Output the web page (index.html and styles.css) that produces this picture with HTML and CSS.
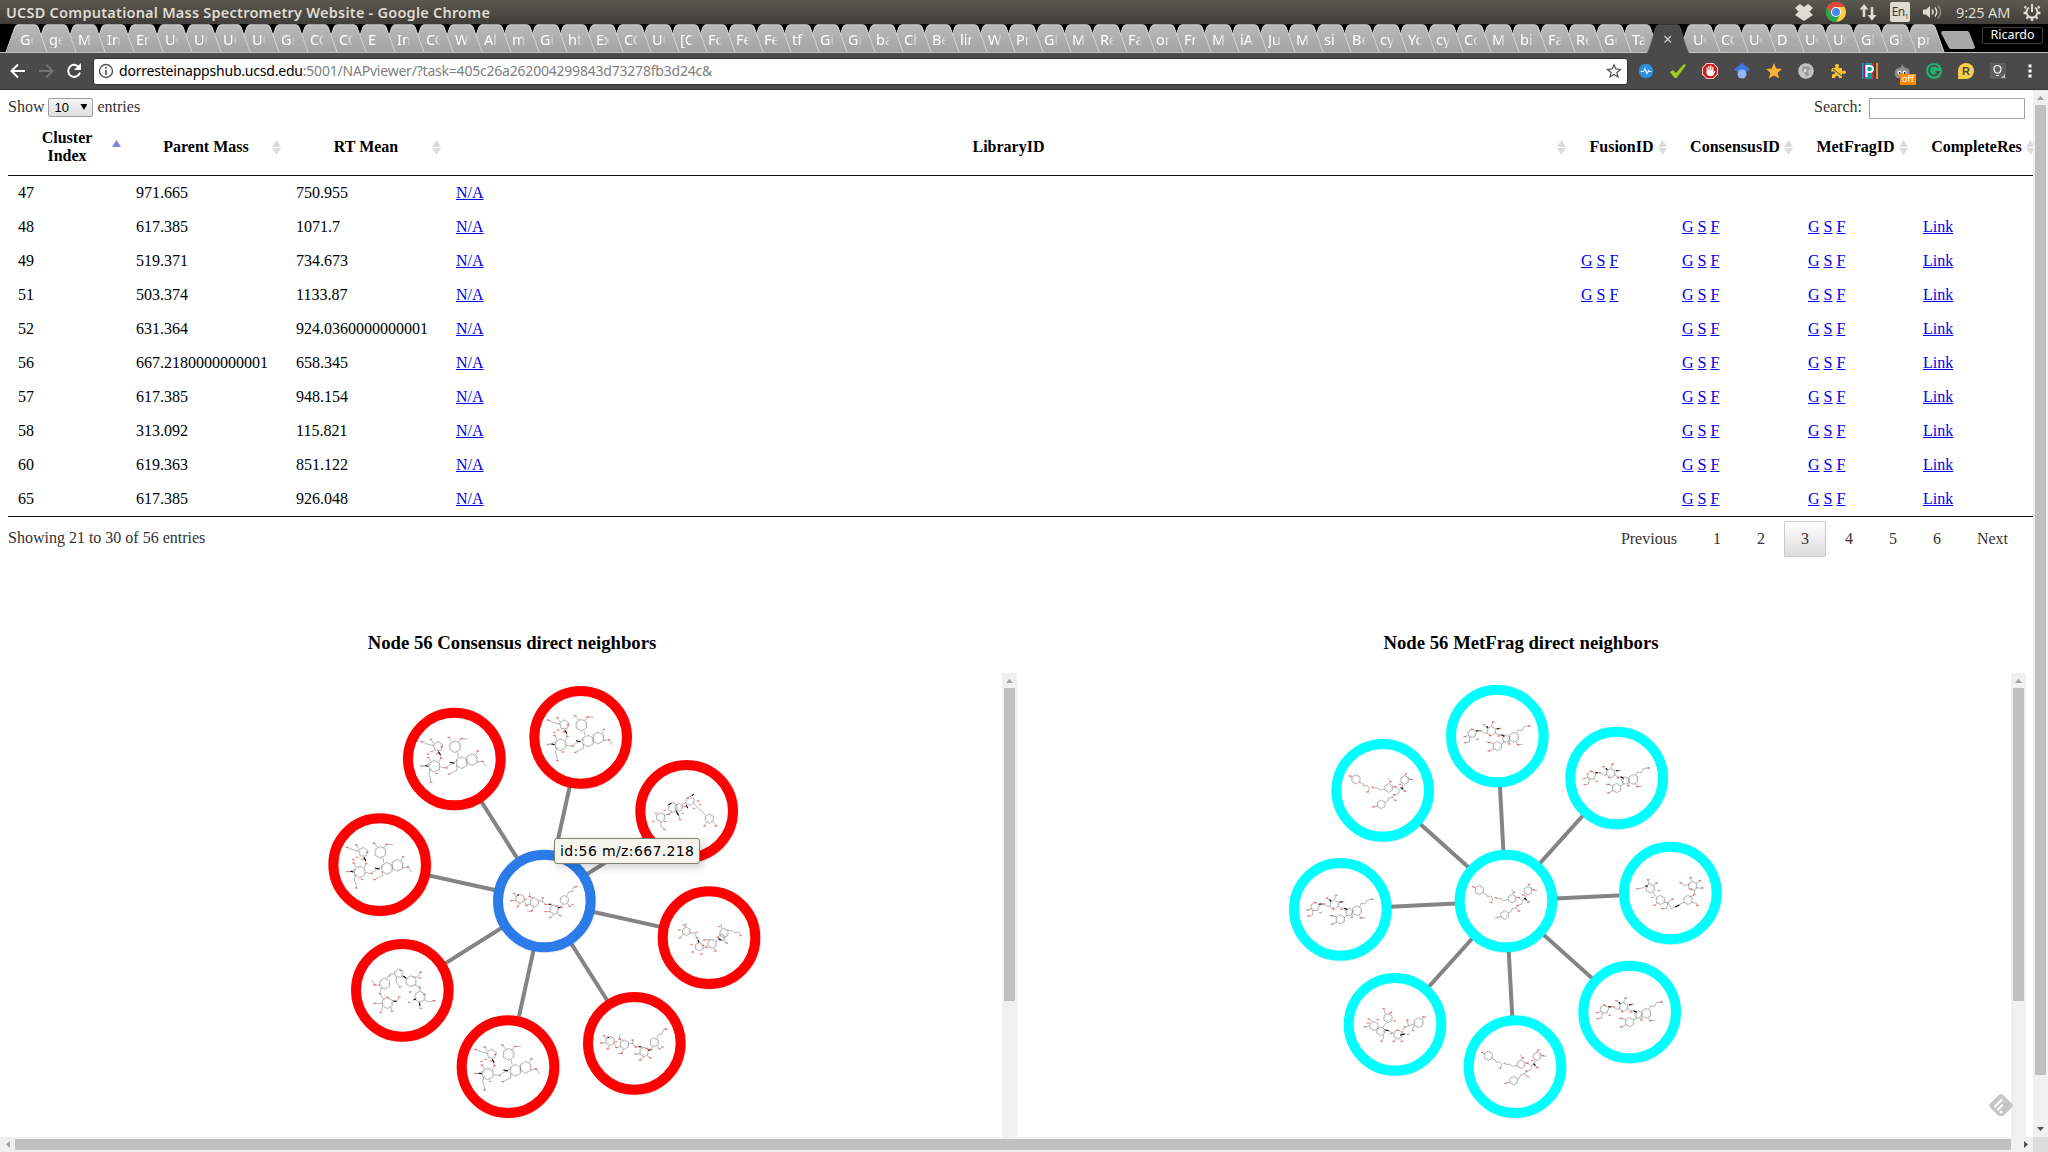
FILE: index.html
```
<!DOCTYPE html>
<html lang="en">
<head>
<meta charset="utf-8">
<title>UCSD Computational Mass Spectrometry Website</title>
<link rel="stylesheet" href="styles.css">
</head>
<body>
<header class="titlebar">
  <span class="window-title">UCSD Computational Mass Spectrometry Website - Google Chrome</span>
  <div class="tray">
    <svg class="tray-icon" viewBox="0 0 20 20"><path fill="#dfdbd2" d="M6 2l4 3 4-3 5 4-3.500 3.500L19 13l-3 2-6 4-6-4-3-2 3.500-3.500L1 6z"/></svg>
    <svg class="tray-icon" viewBox="0 0 20 20"><circle cx="10" cy="10" r="10" fill="#fdd03b"/><path fill="#e2463a" d="M1.300 5a10 10 0 0 1 17.400 0H10L5.700 12.500z"/><path fill="#2aa350" d="M1.300 5A10 10 0 0 0 10 20l4.300-7.500H5.700z"/><circle cx="10" cy="10" r="5" fill="#fff"/><circle cx="10" cy="10" r="4" fill="#4587f0"/></svg>
    <svg class="tray-icon" viewBox="0 0 20 20"><path fill="none" stroke="#dfdbd2" stroke-width="2.600" d="M6 15V4M14 5v11"/><path fill="#dfdbd2" d="M1.500 7.500L6 2l4.500 5.500zM9.500 13l4.500 5.500 4.500-5.500z"/></svg>
    <span class="keyboard">En<small>1</small></span>
    <svg class="tray-icon" viewBox="0 0 20 20"><path fill="#dfdbd2" d="M1 7.500h3L8 4v12l-4-3.500H1z"/><path fill="none" stroke="#dfdbd2" stroke-width="1.500" d="M10 7.500q2 2.500 0 5M13 5.500q3.500 4.500 0 9"/><path fill="none" stroke="#8a877f" stroke-width="1.500" d="M16 3.500q5 6.500 0 13"/></svg>
    <span class="clock">9:25 AM</span>
    <svg class="tray-icon gear" viewBox="0 0 20 20"><path fill="none" stroke="#dfdbd2" stroke-width="2" d="M7 5.500a5.500 5.500 0 1 0 6 0M10 2v8"/><path stroke="#dfdbd2" stroke-width="2.500" d="M4 6L2.500 4.500M16 6l1.500-1.500M4 11H1.500M16 11h2.500M6 15l-1.500 1.800M14 15l1.500 1.800M10 16v3"/></svg>
  </div>
</header>

<nav class="tabstrip">
  <div class="tabs" id="tabs"></div>
  <svg class="new-tab" viewBox="0 0 34 18"><path fill="#a9a9a9" d="M1 0h25q2 0 2.500 2L34 16q0 2-2 2H10q-2 0-2.500-2L0 2z"/></svg>
  <span class="profile">Ricardo</span>
</nav>

<div class="toolbar">
  <svg class="nav-icon" viewBox="0 0 16 16"><path d="M15 8H2M8 1.500L1.500 8 8 14.500" stroke="#fff"/></svg>
  <svg class="nav-icon" viewBox="0 0 16 16"><path d="M1 8h13M8 1.500L14.500 8 8 14.500" stroke="#727272"/></svg>
  <svg class="nav-icon" viewBox="0 0 16 16"><path d="M13.500 5A6 6 0 1 0 14 9.500" stroke="#fff"/><path d="M15 0v7H8z" fill="#fff" stroke="none"/></svg>
  <div class="omnibox">
    <svg class="info" viewBox="0 0 16 16"><circle cx="8" cy="8" r="6.500" fill="none" stroke="#555" stroke-width="1.400"/><path stroke="#555" stroke-width="1.700" d="M8 7v5M8 4v1.700"/></svg>
    <span class="url"><b>dorresteinappshub.ucsd.edu</b>:5001/NAPviewer/?task=405c26a262004299843d73278fb3d24c&amp;</span>
    <svg class="bookmark" viewBox="0 0 16 16"><path fill="none" stroke="#555" stroke-width="1.300" d="M8 1.800l1.800 4.200 4.600.4-3.500 3 1.100 4.500L8 11.500l-4 2.400 1.100-4.500-3.500-3 4.600-.4z"/></svg>
  </div>
  <div class="extensions">
    <svg viewBox="0 0 16 16"><circle cx="8" cy="8" r="7.300" fill="#2f8fdc"/><path fill="none" stroke="#d9efff" stroke-width="1.200" d="M2.500 8.500h3l1.500-3 2 5 1.500-3 1 1h2"/></svg>
    <svg viewBox="0 0 16 16"><path fill="#a4cc1c" d="M0 9l3-2 3 3 8-9 2 1L6.500 15H4.500z"/></svg>
    <svg viewBox="0 0 16 16"><path fill="#fff" d="M4.700 0h6.600L16 4.700v6.600L11.300 16H4.700L0 11.300V4.700z"/><path fill="#df1616" d="M5 .8h6L15.200 5v6L11 15.200H5L.8 11V5z"/><path fill="#fff" d="M4.500 7V4.500h1.200V7h.6V3h1.300v4h.6V2.600h1.300V7h.6V4h1.300v5l1.100-1.500.9.900L11 13H6.300L4.500 10.500z"/></svg>
    <svg viewBox="0 0 16 16"><path fill="#3d76e0" d="M8 0l8 6.500L12 9H4L0 6.500z"/><circle cx="8" cy="11" r="4.500" fill="#93b6f5"/></svg>
    <svg viewBox="0 0 16 16"><path fill="#fbb034" d="M8 0l2.300 5.400 5.700.5-4.300 3.800L13 15.500l-5-3-5 3 1.300-5.800L0 5.900l5.700-.5z"/></svg>
    <svg viewBox="0 0 16 16"><circle cx="8" cy="8" r="7.800" fill="#c4c4c4"/><path fill="#989898" d="M5 3l6 .5 2 3-3 .5 1 5-3 2-1-4-3-2z"/><path fill="#e0e0e0" d="M6 6h2.500v3H6z"/></svg>
    <svg viewBox="0 0 16 16"><path fill="#fcc22d" d="M2 5h3.500Q4 1 7 1t1.500 4H12v3q4-1.500 4 1.200T12 10.500V15H9q0-2.500-2-2.500T5.500 15H2v-3.500q3 0 3-1.700T1 8.500z"/><path stroke="#4a4a4a" d="M3 6l9 7"/></svg>
    <svg viewBox="0 0 16 16"><path fill="#0f9f95" d="M0 0h16v16H0z"/><path fill="#2e8fd0" d="M0 0h1.500v16H0z"/><path fill="#8b2170" d="M1.500 0H3v16H1.500z"/><path fill="#c92c4e" d="M10 0h2v16h-2z"/><path fill="#39404a" d="M12 0h2v16h-2z"/><path fill="#f68b1e" d="M14 0h2v16h-2z"/><path fill="none" stroke="#fff" stroke-width="2" d="M4.500 14V3H8q3 .3 3 3T8 9H4.500"/></svg>
    <span class="ext-off"><svg viewBox="0 0 16 16"><path fill="#8d8d8d" d="M8 0q1 4 4 5l3 1q2 6-2 9H3Q-1 12 2 6l3-1q3-1 3-5z"/><circle cx="5.500" cy="9.500" r="2" fill="#eee"/><circle cx="10.500" cy="9.500" r="2" fill="#eee"/><path d="M5 9h1.500v2H5zM10 9h1.500v2H10z" fill="#333"/></svg><i>off</i></span>
    <svg viewBox="0 0 16 16"><circle cx="8" cy="8" r="8" fill="#1fb270"/><path fill="none" stroke="#4a4a4a" stroke-width="1.800" d="M12 4.500A5 5 0 1 0 12.800 9H9.500"/></svg>
    <svg viewBox="0 0 16 16"><path fill="#fbce4a" d="M0 16V8a8 8 0 1 1 8 8z"/><text x="8" y="12.300" class="r-mark">R</text></svg>
    <svg viewBox="0 0 16 16"><path fill="#5e5e5e" d="M0 0h16v16H0z"/><path fill="none" stroke="#fff" stroke-width="1.200" d="M6 10q-2-1.500-2-4a3.500 3.500 0 0 1 7 0q0 2.500-2 4zM6 12.500h3"/><path fill="#bbb" d="M11 15l4-4v4z"/></svg>
    <svg viewBox="0 0 16 16"><path fill="#fff" d="M6.500 1.500h3v3h-3zM6.500 6.500h3v3h-3zM6.500 11.500h3v3h-3z"/></svg>
  </div>
</div>

<main class="viewport">
  <div class="page">
    <div class="controls">
      <label class="length">Show <span class="select">10<i></i></span> entries</label>
      <label class="search">Search:<input type="text"></label>
    </div>
    <table class="results">
      <colgroup><col class="c1"><col class="c2"><col class="c2"><col class="c3"><col class="c4"><col class="c5"><col class="c6"><col class="c7"></colgroup>
      <thead><tr><th class="asc">Cluster Index</th><th>Parent Mass</th><th>RT Mean</th><th>LibraryID</th><th>FusionID</th><th>ConsensusID</th><th>MetFragID</th><th>CompleteRes</th></tr></thead>
      <tbody id="rows"></tbody>
    </table>
    <div class="footer">
      <span>Showing 21 to 30 of 56 entries</span>
      <div class="pages"><a>Previous</a><a>1</a><a>2</a><a class="current">3</a><a>4</a><a>5</a><a>6</a><a>Next</a></div>
    </div>
    <div class="networks">
      <section class="network">
        <h3>Node 56 Consensus direct neighbors</h3>
        <div class="frame">
          <svg class="graph" id="consensus" viewBox="8 673 994 464"></svg>
          <div class="vbar"><i class="up"></i><b></b></div>
          <div class="tooltip">id:56 m/z:667.218</div>
        </div>
      </section>
      <section class="network">
        <h3>Node 56 MetFrag direct neighbors</h3>
        <div class="frame">
          <svg class="graph" id="metfrag" viewBox="1017 673 994 464"></svg>
          <div class="vbar"><i class="up"></i><b></b></div>
          <svg class="feedly" viewBox="0 0 24 22"><path fill="#c6c6c6" d="M10 .8q2-1.600 4 0l9.300 9.200q1.400 1.500 0 3L15.500 21q-.8 1-2 1h-3q-1.200 0-2-1L.7 13q-1.400-1.500 0-3z"/><path stroke="#fff" stroke-width="2.200" stroke-linecap="round" d="M6 12.500l6.500-6.500M9 15.500l4-4"/><circle cx="12" cy="18" r="1.300" fill="#fff"/></svg>
        </div>
      </section>
    </div>
  </div>
  <div class="vbar main-bar"><i class="up"></i><b></b><i class="down"></i></div>
</main>
<div class="hbar"><i class="left"></i><b></b><i class="right"></i><span class="corner"></span></div>
<script src="app.js"></script>
</body>
</html>
```
FILE: styles.css
```
* { box-sizing: border-box; }
body {
  margin: 0; width: 2048px; height: 1152px; overflow: hidden;
  display: grid; grid-template-rows: 24px 29px 37px 1047px 15px;
  background: #fff; font: 16px/18px "Liberation Serif", serif; color: #000;
}
svg { display: block; }

.titlebar {
  display: flex; justify-content: space-between; align-items: center;
  padding: 0 6px; background: linear-gradient(#5b584e, #3f3e39);
  font-family: "Noto Sans", sans-serif; color: #dfdbd2;
}
.window-title { font-size: 14.500px; font-weight: 600; letter-spacing: 0.230px; white-space: nowrap; }
.tray { display: flex; align-items: center; gap: 12px; }
.tray-icon { width: 20px; height: 20px; }
.keyboard {
  width: 20px; height: 20px; border-radius: 2px; background: #dfdbd2; color: #3c3b37;
  display: flex; align-items: center; justify-content: center;
  font-size: 12px; line-height: 20px; letter-spacing: -0.5px; white-space: nowrap;
}
.keyboard small { font-size: 7px; margin-top: 9px; line-height: 8px; }
.clock { width: 54px; margin-left: 2px; font-size: 14.500px; white-space: nowrap; letter-spacing: -0.1px; }
.gear { margin-left: 0; }

.tabstrip { display: flex; background: #000; font-family: "Noto Sans", sans-serif; padding-left: 6px; border-bottom: 1px solid #c4c4c4; }
.tabs { display: flex; }
.tab { position: relative; flex: none; width: 42px; height: 28px; margin-right: -13px; }
.tab.tight { margin-right: -14px; }
.tab.active { width: 44px; height: 29px; margin-right: -11px; }
.tab svg { width: 100%; height: 100%; overflow: visible; }
.tab span {
  position: absolute; left: 14px; top: 6px; width: 14px; overflow: hidden; white-space: nowrap;
  font-size: 14.500px; line-height: 18px; color: #fff;
  mask-image: linear-gradient(to right, #000 62%, transparent);
}
.new-tab { flex: none; width: 34px; height: 18px; margin: 7px 7px 0 10px; }
.profile {
  flex: none; width: 61px; height: 17px; margin-top: 3px; border: 1px solid #3a3a3a; border-radius: 2px;
  font-size: 12.500px; line-height: 14px; text-align: center; color: #fff;
}

.toolbar {
  display: flex; align-items: center; padding-left: 10px;
  background: #4a4a4a; border-bottom: 1px solid #333;
}
.nav-icon { flex: none; width: 16px; height: 16px; margin-right: 12px; fill: none; stroke-width: 2; }
.omnibox {
  display: flex; align-items: center; width: 1535px; height: 27px; margin-left: -1px; padding: 0 5px 0 4px;
  background: #fff; border: 1px solid #333; border-radius: 3px;
}
.info { width: 16px; height: 16px; }
.url { flex: 1; padding-left: 5px; font: 14px/18px "Noto Sans", sans-serif; letter-spacing: -0.210px; color: #808080; white-space: nowrap; }
.url b { font-weight: 400; color: #000; }
.bookmark { width: 16px; height: 16px; }
.extensions { display: flex; gap: 16px; margin-left: 10px; }
.extensions svg { width: 16px; height: 16px; }
.ext-off { position: relative; }
.ext-off i {
  position: absolute; left: 6px; top: 11px; width: 16px; height: 11px; background: #ff8a00;
  font: 9.500px/10px "Noto Sans", sans-serif; color: #fff; text-align: center;
}
.r-mark { font: bold 11px "Liberation Sans", sans-serif; text-anchor: middle; fill: #4a4a4a; }

.viewport { display: grid; grid-template-columns: 2033px 15px; overflow: hidden; }
.page { padding-left: 8px; overflow: hidden; }
.controls { display: flex; justify-content: space-between; height: 29px; padding: 8px 8px 0 0; color: #333; }
.length { display: flex; align-items: flex-start; gap: 4px; }
.select {
  display: flex; justify-content: space-between; width: 45px; height: 19px; padding: 0 5px;
  border: 1px solid #a0a0a0; border-radius: 2px; background: linear-gradient(#f6f6f6, #dedede);
  font: 13px/18px "Liberation Sans", sans-serif; color: #000;
}
.select i { margin-top: 5px; width: 7px; height: 6px; background: #000; clip-path: polygon(0 0, 100% 0, 50% 100%); }
.search { display: flex; }
.search input { width: 156px; height: 21px; margin-left: 7px; padding: 0; border: 1px solid #a0a0a0; }

.results { width: 2032px; table-layout: fixed; border-collapse: separate; border-spacing: 0; border-bottom: 1px solid #111; }
.c1 { width: 118px; } .c2 { width: 160px; } .c3 { width: 1125px; } .c4 { width: 101px; }
.c5 { width: 126px; } .c6 { width: 115px; } .c7 { width: 127px; }
.results th { position: relative; height: 57px; padding: 10px 18px; border-bottom: 1px solid #111; }
.results th::before, .results th::after {
  content: ""; position: absolute; right: 5px; width: 9px; height: 7px; background: #dcdcdc;
}
.results th::before { top: 21px; clip-path: polygon(50% 0, 100% 100%, 0 100%); }
.results th::after { top: 29px; clip-path: polygon(0 0, 100% 0, 50% 100%); }
.results th.asc::before { background: #7f84df; }
.results th.asc::after { display: none; }
.results td { height: 34px; padding: 8px 10px; white-space: nowrap; }
.results a { color: #0000ee; text-decoration: underline; }

.footer { display: flex; justify-content: space-between; padding: 4px 8px 0 0; color: #333; }
.footer > span { padding-top: 8px; }
.pages { display: flex; gap: 2px; }
.pages a { min-width: 42px; height: 36px; padding: 8px 16px; border: 1px solid transparent; text-align: center; }
.pages .current { border-color: #cacaca; background: linear-gradient(#fff, #dcdcdc); border-radius: 1px; }

.networks { display: flex; margin-top: 74px; }
.network { width: 1009px; }
.network h3 { margin: 0; height: 42px; font-size: 18.72px; line-height: 24px; text-align: center; padding-right: 1px; }
.frame { position: relative; display: flex; height: 464px; }
.graph { width: 994px; height: 464px; }
.tooltip {
  position: absolute; left: 546px; top: 165px; padding: 3px 5px; height: 26px;
  font: 14px/18px "DejaVu Sans", sans-serif; letter-spacing: 0.370px; white-space: nowrap;
  background: #f5f4ed; border: 1px solid #808074; border-radius: 3px; box-shadow: 3px 3px 10px rgba(0, 0, 0, 0.2);
}
.feedly { position: absolute; left: 972px; top: 421px; width: 24px; height: 22px; }

.vbar { display: flex; flex-direction: column; align-items: center; width: 15px; background: #f0f0f0; }
.vbar b { width: 11px; height: 313px; margin-top: 5px; background: #c0c0c0; }
.main-bar b { height: 970px; }
.up { width: 7px; height: 4px; margin-top: 6px; background: #a0a0a0; clip-path: polygon(50% 0, 100% 100%, 0 100%); }
.down { width: 7px; height: 4px; margin-top: 52px; background: #505050; clip-path: polygon(0 0, 100% 0, 50% 100%); }
.hbar { display: flex; align-items: center; background: #f0f0f0; }
.hbar b { width: 1996px; height: 11px; background: #c0c0c0; margin-left: 5px; }
.left { width: 4px; height: 7px; margin-left: 6px; background: #a0a0a0; clip-path: polygon(100% 0, 100% 100%, 0 50%); }
.right { width: 4px; height: 7px; margin-left: 13px; background: #505050; clip-path: polygon(0 0, 100% 50%, 0 100%); }
.corner { width: 15px; height: 15px; margin-left: auto; background: #dcdcdc; }

.edge { stroke: #848484; stroke-width: 12; }
.node { fill: #fff; stroke-width: 30; filter: drop-shadow(2px 3px 2px rgba(0, 0, 0, 0.08)); }
.bond { fill: none; stroke: #444; stroke-width: 1.200; }
.inner { fill: none; stroke: #888; stroke-width: 0.800; stroke-dasharray: 7 7; }
.wedge { fill: none; stroke: #000; stroke-width: 3.200; }
.atom { fill: none; stroke: #f33; stroke-width: 4; opacity: 0.6; }
```
FILE: app.js
```
// Open tabs, by the part of the title that fits.
const titles = ("Go ge M In En UC UC UC UC Gm CC CC E In CC W Al m Gi ht Ex CC UC [C Fo Fe Fe tf Gi Gi ba Ch Be lin W Pr Gl M Re Fa or Fr M iA Ju M si Be cy Yo cy Co M bi Fa Re Go Ta * UC CC UC D UC UC Gl Gl pr").split(" ");
document.getElementById("tabs").innerHTML = titles.map((t, i) => t === "*"
  ? `<div class="tab active" style="z-index:100"><svg viewBox="0 0 44 29"><path fill="#4a4a4a" stroke="#777" stroke-width=".5" d="M0 29.500Q2 28 3 25L9.500 4Q11 .8 13 .8H31Q33 .8 34.500 4L41 25Q42 28 44 29.500"/><path stroke="#ccc" stroke-width="1.300" d="M18.500 12l6.500 6.500M25 12l-6.500 6.500"/></svg></div>`
  : `<div class="tab${i >= 16 ? " tight" : ""}" style="z-index:${90 - i}"><svg viewBox="0 0 42 28"><path fill="url(#tab-fill)" d="M.5 28L9 3Q10 .8 12 .8H29Q31 .8 32 3L41 28z"/><path fill="none" stroke="#d4d4d4" stroke-width="1" d="M0 28L9 3Q10 .8 12 .8H29Q31 .8 32 3L41 28"/><defs><linearGradient id="tab-fill" x2="0" y2="1"><stop stop-color="#bababa"/><stop offset="1" stop-color="#a2a2a2"/></linearGradient></defs></svg><span>${t}</span></div>`
).join("");

// Table rows: cluster, parent mass, retention time, fusion result, other results.
const data = [
  [47, "971.665", "750.955", 0, 0], [48, "617.385", "1071.7", 0, 1], [49, "519.371", "734.673", 1, 1],
  [51, "503.374", "1133.87", 1, 1], [52, "631.364", "924.0360000000001", 0, 1],
  [56, "667.2180000000001", "658.345", 0, 1], [57, "617.385", "948.154", 0, 1],
  [58, "313.092", "115.821", 0, 1], [60, "619.363", "851.122", 0, 1], [65, "617.385", "926.048", 0, 1]
];
const gsf = on => on ? "<a>G</a> <a>S</a> <a>F</a>" : "";
document.getElementById("rows").innerHTML = data.map(([id, mass, rt, fusion, rest]) =>
  `<tr><td>${id}</td><td>${mass}</td><td>${rt}</td><td><a>N/A</a></td><td>${gsf(fusion)}</td><td>${gsf(rest)}</td><td>${gsf(rest)}</td><td>${rest ? "<a>Link</a>" : ""}</td></tr>`
).join("");

// Structures: origin, rings (x y r sides), bonds, stereo wedges, hetero atoms.
const molecules = {
  A: { o: [782, 202], rings: "784 165 18 6,804 213 18 6,835 204 18 6,722 224 18 6,733 164 15 5",
    bonds: "M792 182L794 196M790 206L780 214 768 220 756 228 740 226M790 222L790 236 780 240 766 247M793 152L803 141 822 142M776 150L765 137M845 190L854 178M850 212L866 209 878 224M710 232L706 248 710 258 712 272M706 217L694 222 684 223M720 155L712 143M719 162L703 158 684 150M734 179L742 198M712 210L704 197M735 212L742 199",
    wedge: "M734 180l7 10M694 222l10 2M768 212l14 3", atoms: "712 143,684 150,744 165,731 186,703 187,742 199,704 197,684 223,712 272,729 246,758 229,765 137,803 141,852 178,867 209,766 247,714 180" },
  B: { o: [673, 693], rings: "600 686 14 6,643 697 14 6,702 719 14 6,733 690 14 6",
    bonds: "M612 693L620 706 632 702M655 693L667 694 668 684M667 694L678 703 690 703 698 706M740 678L747 665 756 666 760 652 772 650M714 715L728 704M588 680L582 670M588 692L574 692M598 700L593 710M640 684L628 680 630 667M641 711L635 723 622 724M742 701L749 709M691 725L678 725M702 733L690 743M711 729L721 737",
    wedge: "M686 703l8 0M592 674l5 2M714 714l8-2", atoms: "582 670,574 692,593 710,617 688,629 680,619 706,635 723,668 683,677 704,677 725,690 743,721 737,725 712,749 709,757 704,768 650,711 708" },
  C: { o: [1100, 424], rings: "1022 442 14 6,1058 412 15 6,1076 412 13 5,1110 393 14 6,1168 446 14 6",
    bonds: "M1033 436L1045 432 1056 426M1086 405L1098 398M1122 400L1132 412 1146 424 1156 436M1110 380L1120 372M1160 458L1152 468M1178 456L1190 468M1022 456L1024 470 1034 479M1070 422L1076 434 1080 448",
    wedge: "M1117 378l4-6M1068 424l8 12M1046 404l8-4M1098 405l6 10", atoms: "1008 430,1034 421,1000 454,1036 455,1034 479,1047 433,1088 430,1080 449,1095 410,1104 385,1134 393,1140 404,1154 468,1188 468,1122 415" },
  D: { o: [1167, 803], rings: "1099 784 13 6,1138 830 13 6,1176 821 14 6,1212 789 14 6,1205 802 11 5",
    bonds: "M1110 788L1124 790 1130 803 1136 818M1150 834L1164 827M1188 815L1198 807M1222 780L1236 782 1245 788 1256 786 1264 797M1095 772L1100 758M1090 793L1080 803M1180 834L1192 844M1206 777L1202 762M1172 808L1155 810M1210 810L1220 819",
    wedge: "M1134 810l3 8M1196 806l8 4", atoms: "1092 765,1078 780,1080 803,1129 787,1131 803,1115 824,1149 826,1118 846,1144 852,1160 833,1185 843,1153 810,1197 770,1220 819,1262 797,1193 802" },
  E: { o: [247, 961], rings: "194 941 17 6,236 910 14 5,273 934 17 6,202 999 17 6,300 980 17 6",
    bonds: "M200 925L210 912 224 912M205 921L214 915M246 918L262 928M230 922L228 936 240 950M180 945L165 945 160 936 152 932M184 954L180 970 190 988M218 992L230 994 238 982M280 920L292 922 302 908 302 904M284 945L298 950 300 962M314 990L325 996 345 992M298 996L300 1012M188 1010L182 1026M212 1012L217 1024M188 1000L163 1000",
    wedge: "M250 918l8 6M298 998l2 10M220 994l10 0M280 990l8-3", atoms: "163 945,180 971,203 982,238 981,163 1000,182 1028,216 1024,243 901,240 951,302 907,300 924,300 953,270 966,312 974,268 997,302 1015,342 992" },
  F: { o: [682, 198], rings: "606 190 14 5,664 183 14 6,682 228 14 6,732 202 15 6,708 206 12 5",
    bonds: "M618 184L632 182 645 190 652 187M676 188L684 194 698 196 704 204M740 190L744 180 756 182 762 170 780 167M704 215L694 222M720 212L716 222M600 202L598 216 588 218M670 220L656 218 648 216M652 175L642 164M664 168L670 156M678 177L690 175M672 236L657 243M738 215L744 224 758 223M596 196L584 200",
    wedge: "M618 182l8 0M694 194l9 5M650 168l4 6M680 176l8 0", atoms: "606 178,632 182,642 164,670 156,690 175,660 197,686 198,584 200,586 218,622 208,658 217,657 243,717 222,744 224,778 168" },
  G: { o: [338, 361], rings: "258 328 14 6,356 354 13 6,404 330 13 6,334 403 13 6",
    bonds: "M246 322L239 318M268 336L280 343 282 348 292 346 298 354 294 366M308 354L322 354 332 360 344 357M358 340L362 335 354 324M368 350L378 352 386 360 396 354M398 343L396 358 408 363M388 363L386 370 376 374 366 382 356 384 352 394 346 396M366 382L376 390M324 407L312 410M412 320L420 328 432 330M404 318L408 312",
    wedge: "M392 352l8 5", atoms: "240 318,307 351,293 366,362 335,376 350,408 311,422 328,405 364,372 374,377 391,310 411,390 343" },
  H: { o: [1201, 669], rings: "1141 655 14 6,1171 690 14 6,1268 648 14 6,1254 690 14 6",
    bonds: "M1128 648L1118 654 1104 656M1148 666L1158 680M1182 697L1194 697 1204 716 1218 710 1228 704 1242 697M1176 716L1190 716 1194 697 1208 687M1258 641L1246 648 1234 640M1274 660L1272 676 1260 680M1136 642L1134 629M1150 646L1160 639M1264 634L1262 623M1278 640L1290 632M1280 654L1297 654M1162 700L1153 706M1266 697L1280 700 1284 710",
    wedge: "M1216 711l12-6M1126 648l8 0", atoms: "1134 629,1160 639,1167 662,1102 656,1147 682,1153 706,1208 687,1176 716,1262 623,1290 632,1297 654,1232 639,1263 657,1273 674,1282 706" },
  I: { o: [375, 1063], rings: "312 1068 14 6,332 1084 13 6,354 1044 14 6,384 1093 14 6,446 1058 15 6",
    bonds: "M343 1078L355 1082 370 1090M396 1088L402 1075 415 1068 432 1062M340 1095L340 1106 332 1114M456 1045L470 1040M350 1058L338 1072M432 1066L427 1082M388 1106L396 1114M378 1106L371 1114M396 1095L408 1091M346 1032L341 1016M306 1056L298 1047M298 1066L284 1074M415 1068L412 1050M360 1032L366 1024",
    wedge: "M346 1080l10 2M390 1096l14-5", atoms: "341 1016,362 1028,374 1053,323 1049,296 1047,294 1059,284 1070,334 1114,363 1091,371 1114,396 1114,414 1093,404 1070,412 1050,429 1082,460 1040,382 1081" }
};

function drawMolecule(key, x, y) {
  const m = molecules[key];
  const rings = m.rings.split(",").map(s => {
    const [cx, cy, r, n] = s.split(" ").map(Number);
    const pts = Array.from({ length: n }, (_, k) => {
      const a = Math.PI * 2 * k / n - Math.PI / 2;
      return `${(cx + r * Math.cos(a)).toFixed(1)},${(cy + r * Math.sin(a)).toFixed(1)}`;
    });
    return `<polygon class="bond" points="${pts.join(" ")}"/><circle class="inner" cx="${cx}" cy="${cy}" r="${r - 5}"/>`;
  }).join("");
  const atoms = m.atoms.split(",").map(s => { const [ax, ay] = s.split(" "); return `M${ax - 4} ${ay}h8`; }).join("");
  return `<g transform="translate(${x - m.o[0]} ${y - m.o[1]})">${rings}<path class="bond" d="${m.bonds}"/><path class="wedge" d="${m.wedge}"/><path class="atom" d="${atoms}"/></g>`;
}

function drawGraph(id, left, color, hub, hubColor, nodes) {
  const node = ([x, y, key], c) => `<circle class="node" cx="${x}" cy="${y}" r="139" stroke="${c}"/>${drawMolecule(key, x, y)}`;
  document.getElementById(id).innerHTML = `<g transform="translate(${left} 670) scale(.33333)">`
    + nodes.map(n => `<line class="edge" x1="${hub[0]}" y1="${hub[1]}" x2="${n[0]}" y2="${n[1]}"/>`).join("")
    + node(hub, hubColor) + nodes.map(n => node(n, color)).join("") + "</g>";
}
drawGraph("consensus", 320, "#f00", [673, 693, "B"], "#2b7ce9", [
  [782, 202, "A"], [1100, 424, "C"], [1167, 803, "D"], [943, 1120, "B"],
  [564, 1190, "A"], [247, 961, "E"], [179, 584, "A"], [403, 267, "A"]]);
drawGraph("metfrag", 1270, "#0ff", [708, 693, "G"], "#0ff", [
  [682, 198, "F"], [1040, 324, "F"], [1201, 669, "H"], [1079, 1026, "F"],
  [735, 1190, "G"], [375, 1063, "I"], [211, 718, "F"], [338, 361, "G"]]);
```
